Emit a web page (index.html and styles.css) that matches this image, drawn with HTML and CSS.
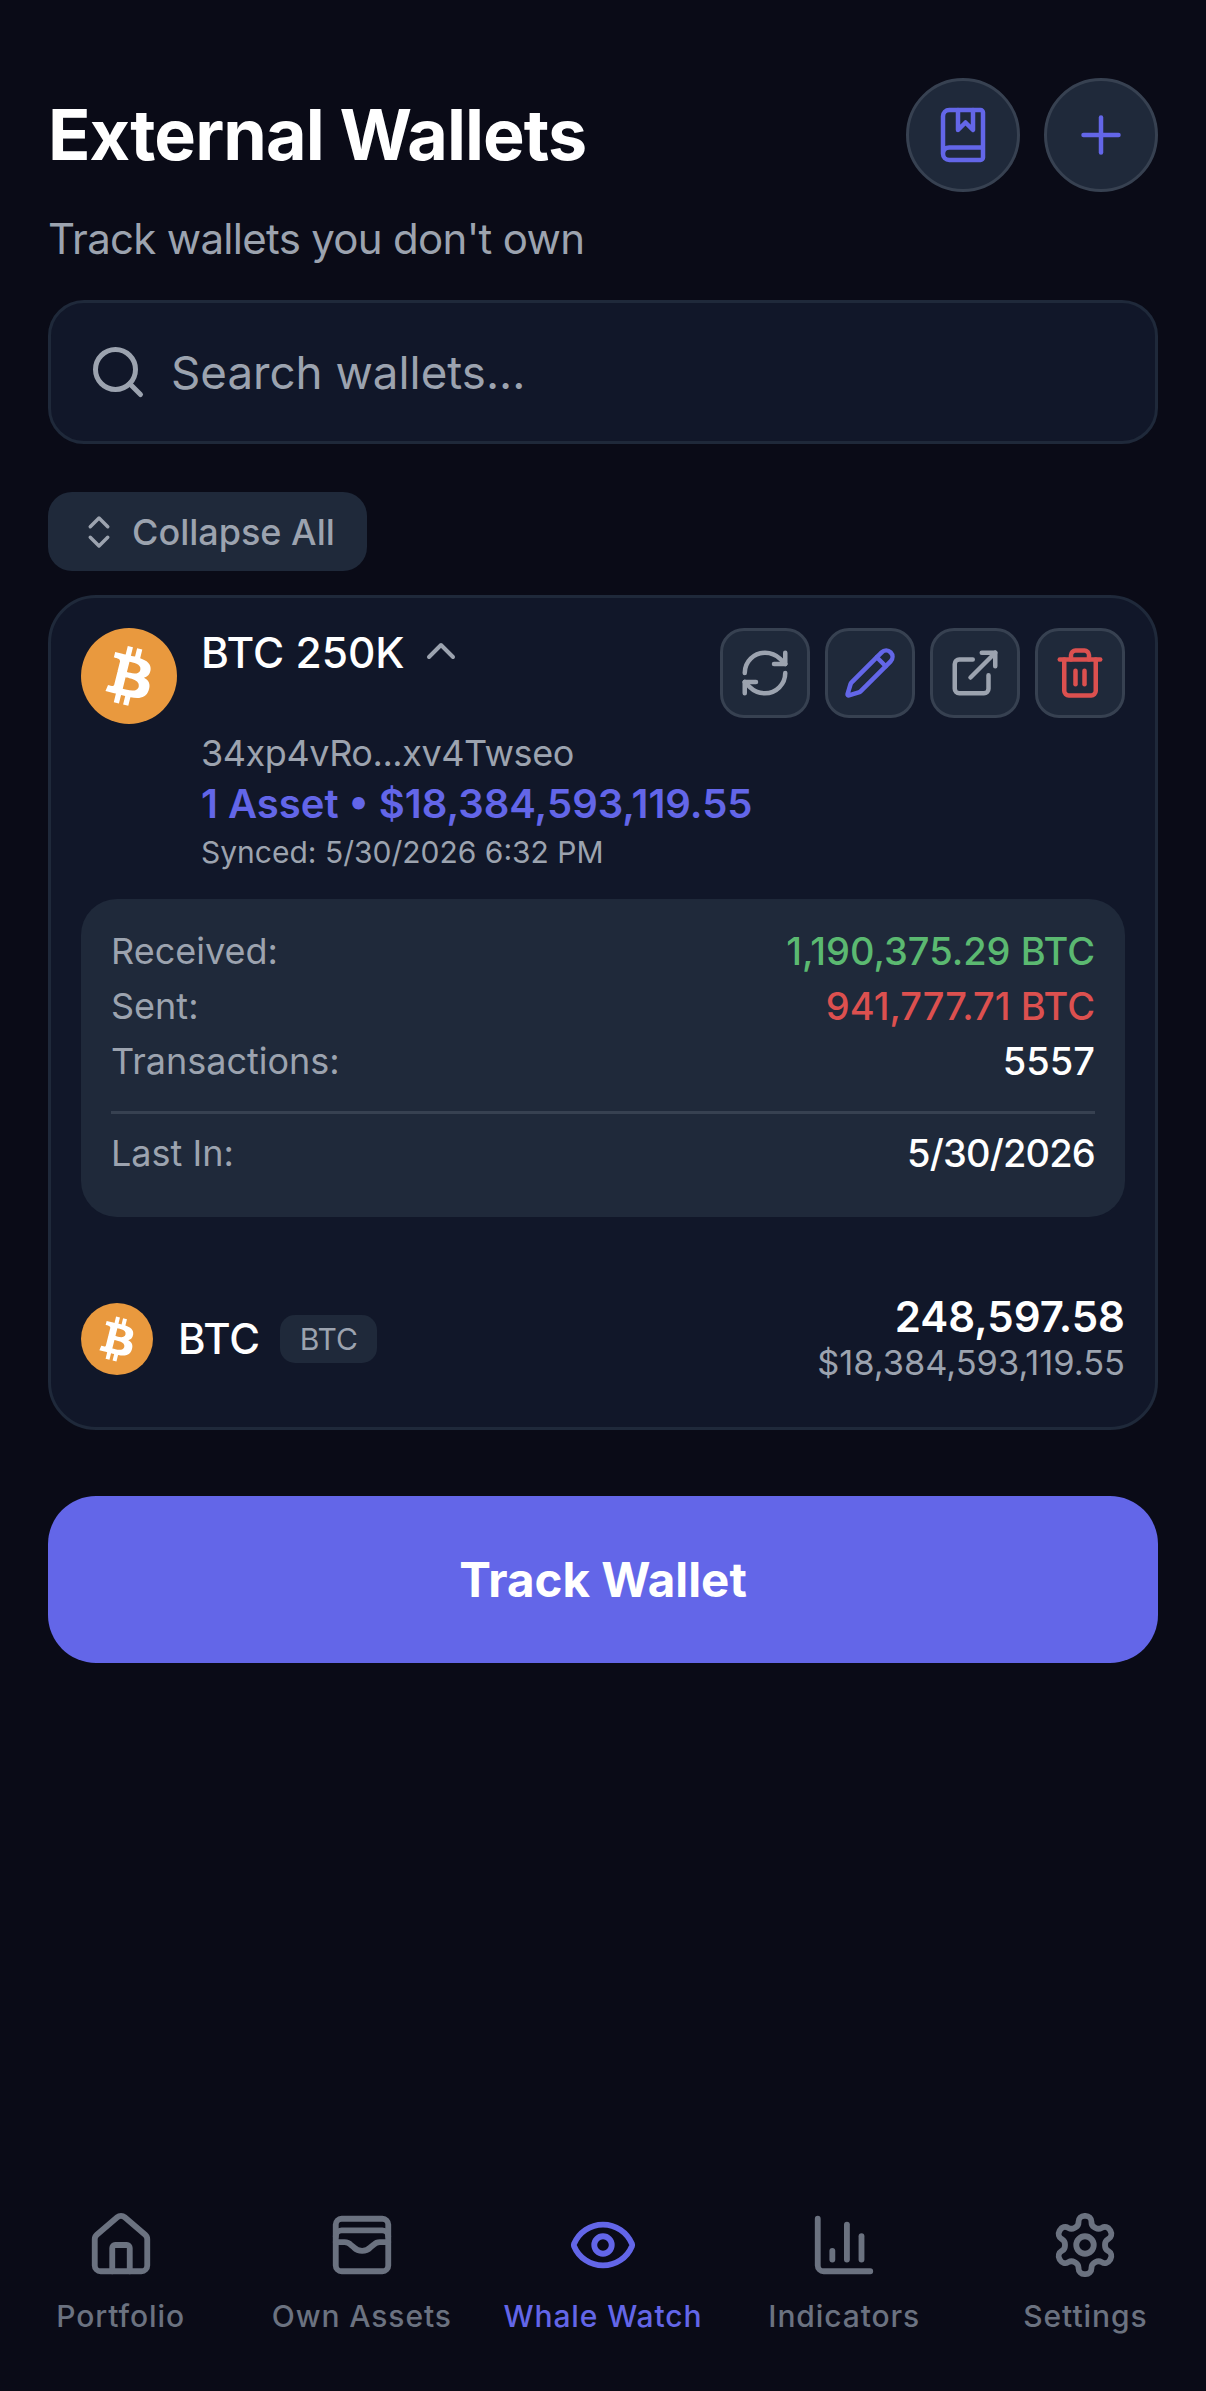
FILE: index.html
```html
<!DOCTYPE html>
<html lang="en">
<head>
  <meta charset="UTF-8">
  <meta name="viewport" content="width=device-width, initial-scale=1.0">
  <title>External Wallets</title>
  <link rel="stylesheet" href="styles.css">
</head>
<body>
  <div class="screen">
    <div class="page-header">
      <h1>External Wallets</h1>
      <div class="header-actions">
        <button class="round-button">
          <svg class="icon accent" viewBox="0 0 24 24">
            <path d="M10 2v8l3-3 3 3V2"></path>
            <path d="M4 19.5v-15A2.5 2.5 0 0 1 6.5 2H19a1 1 0 0 1 1 1v18a1 1 0 0 1-1 1H6.5a1 1 0 0 1 0-5H20"></path>
          </svg>
        </button>
        <button class="round-button">
          <svg class="icon accent" viewBox="0 0 24 24">
            <path d="M5 12h14"></path>
            <path d="M12 5v14"></path>
          </svg>
        </button>
      </div>
    </div>
    <p class="subtitle">Track wallets you don't own</p>

    <div class="search-box">
      <svg class="icon muted" viewBox="0 0 24 24">
        <circle cx="11" cy="11" r="8"></circle>
        <path d="m21 21-4.3-4.3"></path>
      </svg>
      <span>Search wallets...</span>
    </div>

    <button class="collapse-button">
      <svg class="icon muted" viewBox="0 0 24 24">
        <path d="m7 15 5 5 5-5"></path>
        <path d="m7 9 5-5 5 5"></path>
      </svg>
      Collapse All
    </button>

    <div class="wallet-card">
      <div class="wallet-top">
        <svg class="coin coin-large" viewBox="0 0 32 32">
          <circle class="coin-bg" cx="16" cy="16" r="16"></circle>
          <path class="coin-mark" d="M23.189 14.02c.314-2.096-1.283-3.223-3.465-3.975l.708-2.84-1.728-.43-.69 2.765c-.454-.114-.92-.22-1.385-.326l.695-2.783L15.596 6l-.708 2.839c-.376-.086-.746-.17-1.104-.26l.002-.009-2.384-.595-.46 1.846s1.283.294 1.256.312c.7.175.826.638.805 1.006l-.806 3.235c.048.012.11.03.18.057l-.183-.045-1.13 4.532c-.086.212-.303.531-.793.41.018.025-1.256-.313-1.256-.313l-.858 1.978 2.25.561c.418.105.828.215 1.231.318l-.715 2.872 1.727.43.708-2.84c.472.127.93.245 1.378.357l-.706 2.828 1.728.43.715-2.866c2.948.558 5.164.333 6.097-2.333.752-2.146-.037-3.385-1.588-4.192 1.13-.26 1.98-1.003 2.207-2.538zm-3.95 5.538c-.533 2.147-4.148.986-5.32.695l.95-3.805c1.172.293 4.929.872 4.37 3.11zm.535-5.569c-.487 1.953-3.495.96-4.47.717l.86-3.45c.975.243 4.118.696 3.61 2.733z"></path>
        </svg>
        <div class="wallet-name">
          <span>BTC 250K</span>
          <svg class="icon muted" viewBox="0 0 24 24">
            <path d="m18 15-6-6-6 6"></path>
          </svg>
        </div>
        <div class="wallet-actions">
          <button class="square-button">
            <svg class="icon muted" viewBox="0 0 24 24">
              <path d="M3 12a9 9 0 0 1 9-9 9.75 9.75 0 0 1 6.74 2.74L21 8"></path>
              <path d="M21 3v5h-5"></path>
              <path d="M21 12a9 9 0 0 1-9 9 9.75 9.75 0 0 1-6.74-2.74L3 16"></path>
              <path d="M8 16H3v5"></path>
            </svg>
          </button>
          <button class="square-button">
            <svg class="icon accent" viewBox="0 0 24 24">
              <path d="M21.17 6.81a1 1 0 0 0-3.99-3.99L3.84 16.17a2 2 0 0 0-.5.83l-1.32 4.35a.5.5 0 0 0 .62.62l4.35-1.32a2 2 0 0 0 .83-.5z"></path>
              <path d="m15 5 4 4"></path>
            </svg>
          </button>
          <button class="square-button">
            <svg class="icon muted" viewBox="0 0 24 24">
              <path d="M15 3h6v6"></path>
              <path d="M10 14 21 3"></path>
              <path d="M18 13v6a2 2 0 0 1-2 2H5a2 2 0 0 1-2-2V8a2 2 0 0 1 2-2h6"></path>
            </svg>
          </button>
          <button class="square-button">
            <svg class="icon danger" viewBox="0 0 24 24">
              <path d="M3 6h18"></path>
              <path d="M19 6v14c0 1-1 2-2 2H7c-1 0-2-1-2-2V6"></path>
              <path d="M8 6V4c0-1 1-2 2-2h4c1 0 2 1 2 2v2"></path>
              <path d="M10 11v6"></path>
              <path d="M14 11v6"></path>
            </svg>
          </button>
        </div>
      </div>

      <div class="wallet-info">
        <div class="wallet-address">34xp4vRo...xv4Twseo</div>
        <div class="wallet-total">1 Asset • $18,384,593,119.55</div>
        <div class="wallet-synced">Synced: 5/30/2026 6:32 PM</div>
      </div>

      <div class="stats-panel">
        <div class="stat-row">
          <span class="stat-label">Received:</span>
          <span class="stat-value green">1,190,375.29 BTC</span>
        </div>
        <div class="stat-row">
          <span class="stat-label">Sent:</span>
          <span class="stat-value red">941,777.71 BTC</span>
        </div>
        <div class="stat-row">
          <span class="stat-label">Transactions:</span>
          <span class="stat-value">5557</span>
        </div>
        <div class="stat-divider"></div>
        <div class="stat-row">
          <span class="stat-label">Last In:</span>
          <span class="stat-value stat-date">5/30/2026</span>
        </div>
      </div>

      <div class="asset-row">
        <svg class="coin coin-small" viewBox="0 0 32 32">
          <circle class="coin-bg" cx="16" cy="16" r="16"></circle>
          <path class="coin-mark" d="M23.189 14.02c.314-2.096-1.283-3.223-3.465-3.975l.708-2.84-1.728-.43-.69 2.765c-.454-.114-.92-.22-1.385-.326l.695-2.783L15.596 6l-.708 2.839c-.376-.086-.746-.17-1.104-.26l.002-.009-2.384-.595-.46 1.846s1.283.294 1.256.312c.7.175.826.638.805 1.006l-.806 3.235c.048.012.11.03.18.057l-.183-.045-1.13 4.532c-.086.212-.303.531-.793.41.018.025-1.256-.313-1.256-.313l-.858 1.978 2.25.561c.418.105.828.215 1.231.318l-.715 2.872 1.727.43.708-2.84c.472.127.93.245 1.378.357l-.706 2.828 1.728.43.715-2.866c2.948.558 5.164.333 6.097-2.333.752-2.146-.037-3.385-1.588-4.192 1.13-.26 1.98-1.003 2.207-2.538zm-3.95 5.538c-.533 2.147-4.148.986-5.32.695l.95-3.805c1.172.293 4.929.872 4.37 3.11zm.535-5.569c-.487 1.953-3.495.96-4.47.717l.86-3.45c.975.243 4.118.696 3.61 2.733z"></path>
        </svg>
        <span class="asset-name">BTC</span>
        <span class="asset-badge">BTC</span>
        <div class="asset-amounts">
          <div class="asset-qty">248,597.58</div>
          <div class="asset-usd">$18,384,593,119.55</div>
        </div>
      </div>
    </div>

    <button class="track-button">Track Wallet</button>

    <nav class="tab-bar">
      <div class="tab">
        <svg class="icon" viewBox="0 0 24 24">
          <path d="M15 21v-8a1 1 0 0 0-1-1h-4a1 1 0 0 0-1 1v8"></path>
          <path d="M3 10a2 2 0 0 1 .709-1.528l7-5.999a2 2 0 0 1 2.582 0l7 5.999A2 2 0 0 1 21 10v9a2 2 0 0 1-2 2H5a2 2 0 0 1-2-2z"></path>
        </svg>
        <span>Portfolio</span>
      </div>
      <div class="tab">
        <svg class="icon" viewBox="0 0 24 24">
          <rect x="3" y="3" width="18" height="18" rx="2"></rect>
          <path d="M3 9a2 2 0 0 1 2-2h14a2 2 0 0 1 2 2"></path>
          <path d="M3 11h3c.8 0 1.6.3 2.1.9l1.1.9c1.6 1.6 4.1 1.6 5.7 0l1.1-.9c.5-.5 1.3-.9 2.1-.9H21"></path>
        </svg>
        <span>Own Assets</span>
      </div>
      <div class="tab active">
        <svg class="icon" viewBox="0 0 24 24">
          <path d="M2.062 12.348a1 1 0 0 1 0-.696 10.75 10.75 0 0 1 19.876 0 1 1 0 0 1 0 .696 10.75 10.75 0 0 1-19.876 0"></path>
          <circle cx="12" cy="12" r="3"></circle>
        </svg>
        <span>Whale Watch</span>
      </div>
      <div class="tab">
        <svg class="icon" viewBox="0 0 24 24">
          <path d="M3 3v16a2 2 0 0 0 2 2h16"></path>
          <path d="M18 17V9"></path>
          <path d="M13 17V5"></path>
          <path d="M8 17v-3"></path>
        </svg>
        <span>Indicators</span>
      </div>
      <div class="tab">
        <svg class="icon" viewBox="0 0 24 24">
          <path d="M12.22 2h-.44a2 2 0 0 0-2 2v.18a2 2 0 0 1-1 1.73l-.43.25a2 2 0 0 1-2 0l-.15-.08a2 2 0 0 0-2.73.73l-.22.38a2 2 0 0 0 .73 2.73l.15.1a2 2 0 0 1 1 1.72v.51a2 2 0 0 1-1 1.74l-.15.09a2 2 0 0 0-.73 2.73l.22.38a2 2 0 0 0 2.73.73l.15-.08a2 2 0 0 1 2 0l.43.25a2 2 0 0 1 1 1.73V20a2 2 0 0 0 2 2h.44a2 2 0 0 0 2-2v-.18a2 2 0 0 1 1-1.73l.43-.25a2 2 0 0 1 2 0l.15.08a2 2 0 0 0 2.73-.73l.22-.39a2 2 0 0 0-.73-2.73l-.15-.08a2 2 0 0 1-1-1.74v-.5a2 2 0 0 1 1-1.74l.15-.09a2 2 0 0 0 .73-2.73l-.22-.38a2 2 0 0 0-2.73-.73l-.15.08a2 2 0 0 1-2 0l-.43-.25a2 2 0 0 1-1-1.73V4a2 2 0 0 0-2-2z"></path>
          <circle cx="12" cy="12" r="3"></circle>
        </svg>
        <span>Settings</span>
      </div>
    </nav>
  </div>
</body>
</html>
```

FILE: styles.css
```css
* {
  margin: 0;
  padding: 0;
  box-sizing: border-box;
}

body {
  font-family: Inter, "Noto Sans", sans-serif;
  background-color: #0a0b17;
  color: #ffffff;
}

button {
  font-family: inherit;
}

.screen {
  height: 2391px;
  padding: 78px 48px 0;
  display: flex;
  flex-direction: column;
}

.icon {
  fill: none;
  stroke: currentColor;
  stroke-width: 2;
  stroke-linecap: round;
  stroke-linejoin: round;
  flex-shrink: 0;
}

.accent { color: #6366e8; }
.muted { color: #9ca3af; }
.danger { color: #dc504f; }

/* Header */
.page-header {
  display: flex;
  align-items: center;
  justify-content: space-between;
}

.page-header h1 {
  font-size: 70px;
  line-height: 114px;
  font-weight: 700;
  letter-spacing: -0.9px;
}

.header-actions {
  display: flex;
  gap: 24px;
}

.round-button {
  width: 114px;
  height: 114px;
  border-radius: 50%;
  background-color: #1f293a;
  border: 3px solid #374151;
  display: flex;
  align-items: center;
  justify-content: center;
}

.round-button .icon {
  width: 60px;
  height: 60px;
  stroke-width: 1.8;
}

.subtitle {
  margin-top: 20px;
  font-size: 42px;
  line-height: 54px;
  letter-spacing: -0.7px;
  color: #9ca3af;
}

/* Search */
.search-box {
  margin-top: 34px;
  height: 144px;
  padding: 0 37px;
  display: flex;
  align-items: center;
  gap: 23px;
  background-color: #111729;
  border: 3px solid #1f293a;
  border-radius: 36px;
  font-size: 45.7px;
  color: #9ca3af;
}

.search-box .icon {
  width: 60px;
  height: 60px;
}

.collapse-button {
  margin-top: 48px;
  align-self: flex-start;
  height: 79px;
  padding: 0 32px 0 30px;
  display: flex;
  align-items: center;
  gap: 12px;
  background-color: #1f293a;
  border: none;
  border-radius: 24px;
  font-size: 36px;
  font-weight: 500;
  color: #9ca3af;
}

.collapse-button .icon {
  width: 42px;
  height: 42px;
}

/* Wallet card */
.wallet-card {
  margin-top: 24px;
  height: 835px;
  padding: 30px;
  background-color: #111729;
  border: 3px solid #1f293a;
  border-radius: 48px;
}

.wallet-top {
  display: flex;
  align-items: flex-start;
}

.coin-bg { fill: #e9993e; }
.coin-mark { fill: #ffffff; }

.coin-large {
  width: 96px;
  height: 96px;
  flex-shrink: 0;
}

.wallet-name {
  margin-left: 24px;
  display: flex;
  align-items: center;
  gap: 12px;
  font-size: 42.5px;
  line-height: 50px;
  font-weight: 500;
}

.wallet-name .icon {
  width: 48px;
  height: 48px;
  margin-top: -4px;
}

.wallet-actions {
  margin-left: auto;
  display: flex;
  gap: 15px;
}

.square-button {
  width: 90px;
  height: 90px;
  border-radius: 24px;
  background-color: #1f293a;
  border: 3px solid #374151;
  display: flex;
  align-items: center;
  justify-content: center;
}

.square-button .icon {
  width: 54px;
  height: 54px;
}

.wallet-info {
  margin-left: 120px;
  margin-top: 5px;
}

.wallet-address {
  font-size: 36px;
  line-height: 48px;
  letter-spacing: -0.45px;
  color: #9ca3af;
}

.wallet-total {
  margin-top: 2px;
  font-size: 40px;
  line-height: 50px;
  font-weight: 600;
  color: #6366e8;
}

.wallet-synced {
  font-size: 30px;
  line-height: 46px;
  color: #9ca3af;
}

/* Stats */
.stats-panel {
  margin-top: 24px;
  height: 318px;
  padding: 24px 30px 0;
  background-color: #1f293a;
  border-radius: 36px;
}

.stat-row {
  height: 55px;
  display: flex;
  align-items: center;
  justify-content: space-between;
  font-size: 36px;
}

.stat-label { color: #9ca3af; }

.stat-value {
  font-size: 38px;
  font-weight: 500;
}

.stat-date { letter-spacing: -0.8px; }
.green { color: #5bb971; }
.red { color: #dc504f; }

.stat-divider {
  height: 3px;
  margin: 23px 0 11px;
  background-color: #374151;
}

/* Asset row */
.asset-row {
  margin-top: 74px;
  display: flex;
  align-items: center;
}

.coin-small {
  width: 72px;
  height: 72px;
  flex-shrink: 0;
}

.asset-name {
  margin-left: 25px;
  font-size: 42px;
  font-weight: 500;
}

.asset-badge {
  margin-left: 20px;
  padding: 0 19.5px;
  height: 48px;
  display: flex;
  align-items: center;
  background-color: #1f293a;
  border-radius: 15px;
  font-size: 30px;
  color: #9ca3af;
}

.asset-amounts {
  margin-left: auto;
  margin-top: 3px;
  text-align: right;
}

.asset-qty {
  font-size: 42px;
  line-height: 46px;
  font-weight: 600;
}

.asset-usd {
  font-size: 34.4px;
  line-height: 46px;
  color: #9ca3af;
}

/* Track button */
.track-button {
  margin-top: 66px;
  height: 167px;
  background-color: #6366e8;
  border: none;
  border-radius: 48px;
  font-size: 47.5px;
  font-weight: 700;
  color: #ffffff;
}

/* Bottom tabs */
.tab-bar {
  margin: auto -48px 0;
  padding-bottom: 55px;
  display: grid;
  grid-template-columns: repeat(5, 1fr);
}

.tab {
  display: flex;
  flex-direction: column;
  align-items: center;
  gap: 16px;
  color: #6b7280;
  font-size: 30px;
  line-height: 40px;
  font-weight: 500;
  letter-spacing: 0.9px;
}

.tab .icon {
  width: 70px;
  height: 70px;
}

.tab.active {
  color: #6366e8;
}
```
